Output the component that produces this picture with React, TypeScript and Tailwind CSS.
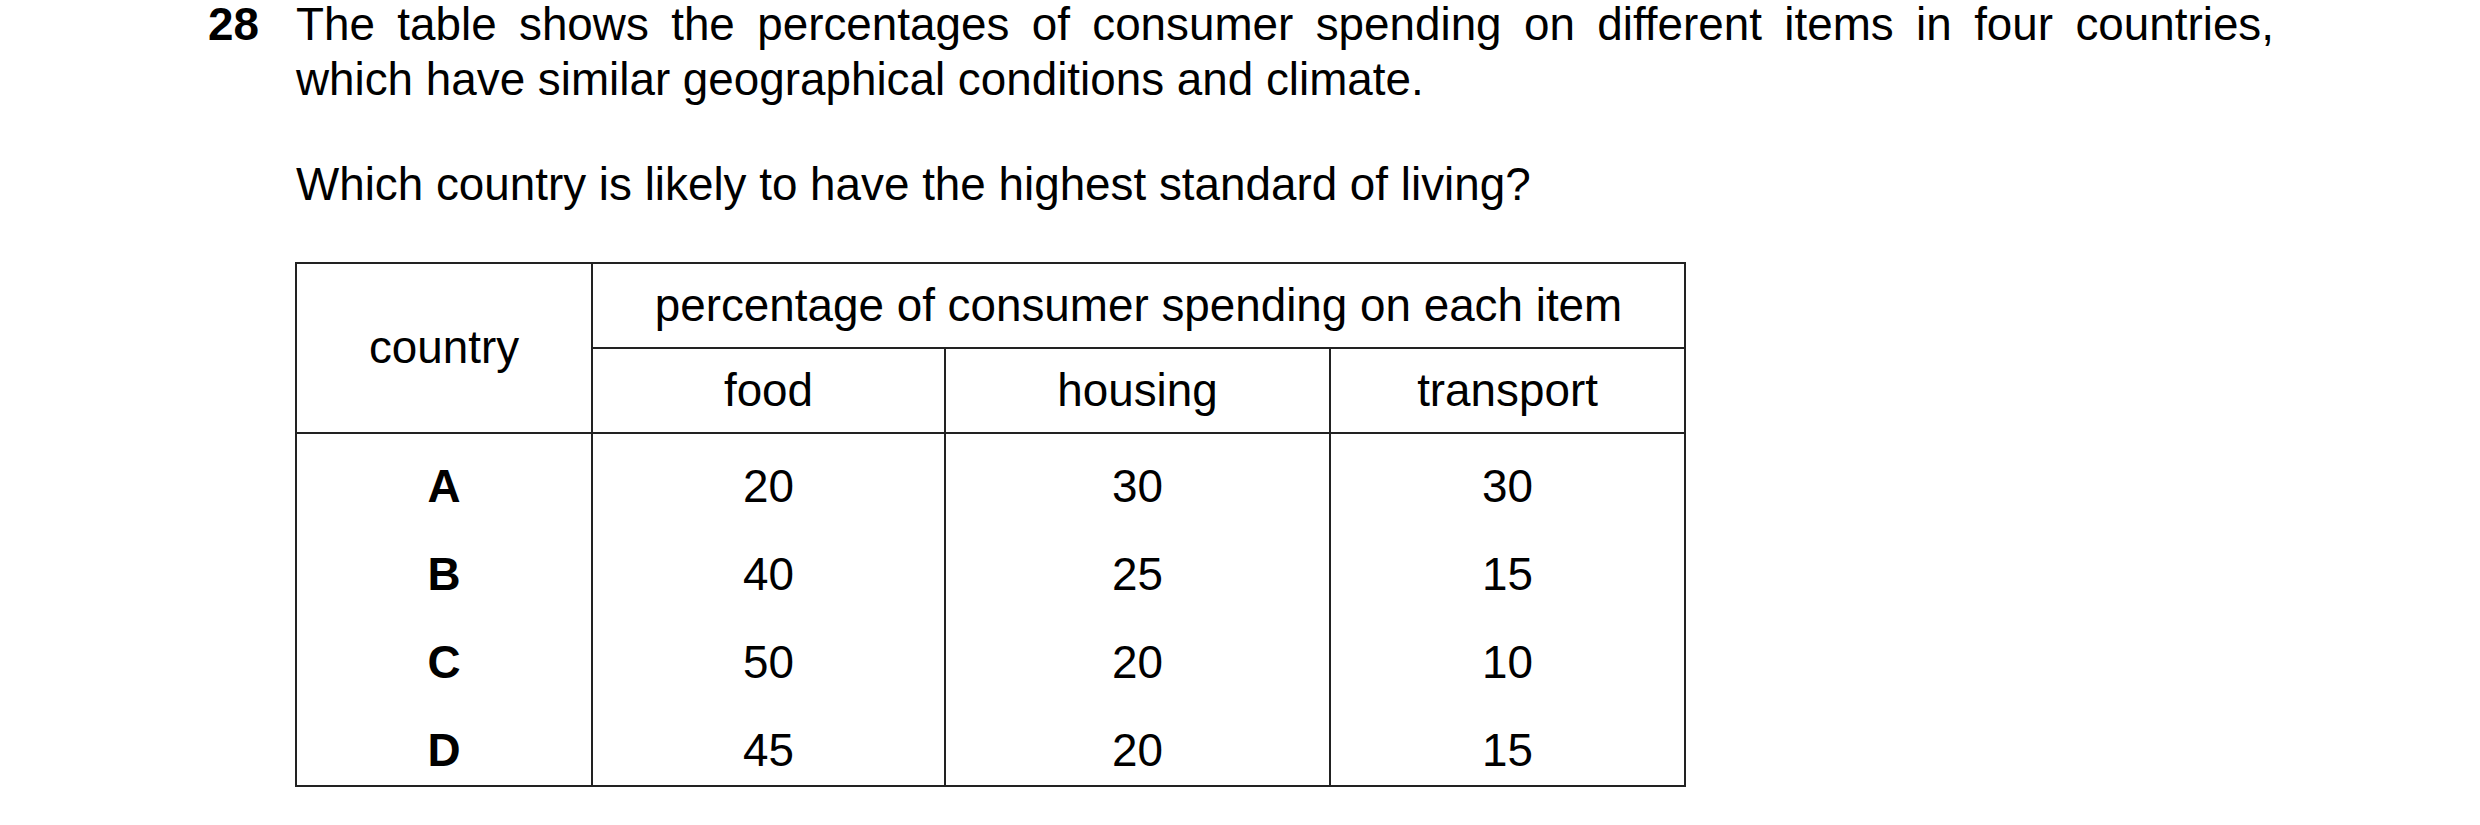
import React from "react";

const rows = [
  ["A", "20", "30", "30"],
  ["B", "40", "25", "15"],
  ["C", "50", "20", "10"],
  ["D", "45", "20", "15"],
];

export default function App() {
  return (
    <div className="w-[2480px] h-[825px] bg-white text-black font-['Liberation_Sans',Arial,sans-serif] text-[45.8px] leading-[55px]">
      <div className="flex pl-[208px] -mt-[3px]">
        <div className="w-[88px] shrink-0 font-bold">28</div>
        <div className="w-[1978px]">
          <p className="text-justify">
            The table shows the percentages of consumer spending on different items in four countries, which have similar geographical conditions and climate.
          </p>
          <p className="mt-[50px]">Which country is likely to have the highest standard of living?</p>
          <table className="mt-[50px] -ml-[1px] table-fixed border-collapse border-2 border-[#222] text-center leading-none">
            <colgroup>
              <col className="w-[296px]" />
              <col className="w-[353px]" />
              <col className="w-[385px]" />
              <col className="w-[355px]" />
            </colgroup>
            <tbody>
              <tr className="h-[85px]">
                <td rowSpan={2} className="border-2 border-[#222] align-middle">country</td>
                <td colSpan={3} className="border-2 border-[#222] align-middle">
                  percentage of consumer spending on each item
                </td>
              </tr>
              <tr className="h-[85px]">
                <td className="border-2 border-[#222] align-middle">food</td>
                <td className="border-2 border-[#222] align-middle">housing</td>
                <td className="border-2 border-[#222] align-middle">transport</td>
              </tr>
              <tr className="h-[352px]">
                {[0, 1, 2, 3].map((c) => (
                  <td key={c} className="border-2 border-[#222] align-top p-0">
                    <div className={`flex flex-col gap-[46px] pt-[32px] pb-[13px] leading-[42px] ${c === 0 ? "font-bold" : ""}`}>
                      {rows.map((r) => (
                        <div key={r[0]}>{r[c]}</div>
                      ))}
                    </div>
                  </td>
                ))}
              </tr>
            </tbody>
          </table>
        </div>
      </div>
    </div>
  );
}
